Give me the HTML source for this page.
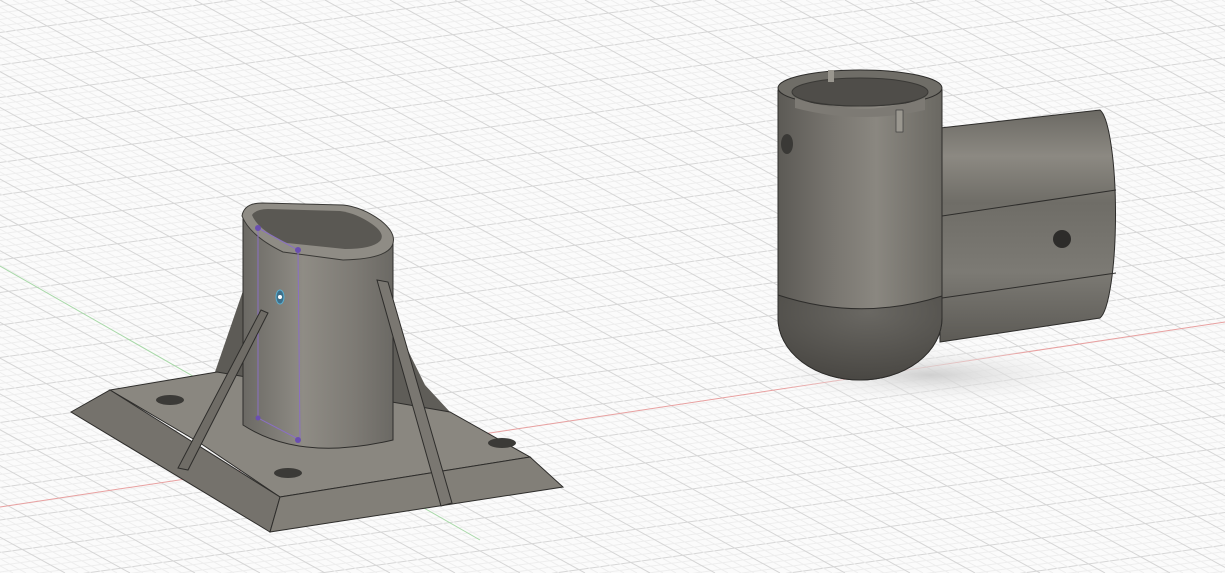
<!DOCTYPE html>
<html><head><meta charset="utf-8"><style>
html,body{margin:0;padding:0;background:#fbfbfb;overflow:hidden;width:1225px;height:573px}
svg{display:block}
</style></head><body>
<svg id="s" width="1225" height="573" viewBox="0 0 1225 573" xmlns="http://www.w3.org/2000/svg">
<defs>
<linearGradient id="vcyl" x1="0" x2="1" y1="0" y2="0">
<stop offset="0" stop-color="#5c5a55"/><stop offset="0.35" stop-color="#7a7771"/><stop offset="0.6" stop-color="#8a8780"/><stop offset="1" stop-color="#6a6862"/></linearGradient>
<linearGradient id="hcyl" x1="0" x2="0" y1="0" y2="1">
<stop offset="0" stop-color="#6b6963"/><stop offset="0.2" stop-color="#8c8982"/><stop offset="0.4" stop-color="#6f6d67"/><stop offset="0.7" stop-color="#7c7a74"/><stop offset="1" stop-color="#5c5a55"/></linearGradient>
<radialGradient id="sph" cx="0.55" cy="0.2" r="0.9">
<stop offset="0" stop-color="#6a6863"/><stop offset="1" stop-color="#45433f"/></radialGradient>
<linearGradient id="tower" x1="0" x2="1">
<stop offset="0" stop-color="#6b6964"/><stop offset="0.4" stop-color="#8f8c85"/><stop offset="0.75" stop-color="#7d7a74"/><stop offset="1" stop-color="#6b6964"/></linearGradient>
<radialGradient id="shadow" cx="0.5" cy="0.5" r="0.5">
<stop offset="0" stop-color="#cfcfcf"/><stop offset="1" stop-color="#f4f4f4" stop-opacity="0"/></radialGradient>
</defs>
<g id="grid" stroke-width="1"></g>
<line x1="0" y1="507" x2="1225" y2="322" stroke="#e8a0a0" stroke-width="1"/>
<line x1="0" y1="266" x2="480" y2="540" stroke="#a8d8a8" stroke-width="1"/>

<ellipse cx="930" cy="375" rx="170" ry="30" fill="url(#shadow)"/>
<path d="M940 128 L1100 110 A18 105 0 0 1 1100 318 L940 342 Z" fill="url(#hcyl)" stroke="#2e2d2b" stroke-width="1"/>
<path d="M942 216 L1116 190" stroke="#2e2d2b" fill="none"/>
<path d="M942 298 L1116 273" stroke="#2e2d2b" fill="none"/>
<ellipse cx="1062" cy="239" rx="9" ry="9" fill="#2d2c2a"/>
<path d="M778 90 L778 318 A82 62 0 0 0 942 318 L942 90 Z" fill="url(#vcyl)" stroke="#2e2d2b"/>
<path d="M778 295 Q860 322 942 296 L942 318 A82 62 0 0 1 778 318 Z" fill="url(#sph)" stroke="#2e2d2b"/>
<ellipse cx="860" cy="88" rx="82" ry="18" fill="#6f6d67" stroke="#2e2d2b"/>
<ellipse cx="860" cy="92" rx="68" ry="14" fill="#4f4d49" stroke="#3a3936"/>
<path d="M795 98 Q860 120 925 98 L925 110 Q860 125 795 108Z" fill="#7d7a74"/>
<rect x="828" y="70" width="6" height="12" fill="#9a978f"/>
<rect x="896" y="110" width="7" height="22" fill="#9a978f" stroke="#333" stroke-width=".6"/>
<ellipse cx="787" cy="144" rx="6" ry="10" fill="#3a3936"/>

<polygon points="215,372 245,285 250,425" fill="#5d5b56"/>
<polygon points="393,320 425,385 450,412 393,425" fill="#5f5d58"/>
<polygon points="110,390 217,372 450,412 530,457 280,497 200,443" fill="#8a8780" stroke="#2e2d2b"/>
<polygon points="71,412 110,390 280,497 270,532" fill="#75726c" stroke="#2e2d2b"/>
<polygon points="280,497 530,457 563,487 270,532" fill="#827f78" stroke="#2e2d2b"/>
<ellipse cx="170" cy="400" rx="14" ry="5" fill="#3b3a37"/>
<ellipse cx="288" cy="473" rx="14" ry="5" fill="#3b3a37"/>
<ellipse cx="502" cy="443" rx="14" ry="5" fill="#3b3a37"/>
<path d="M243 218 L243 425 Q300 462 393 440 L393 243 Z" fill="url(#tower)" stroke="#2e2d2b"/>
<path d="M242 216 Q244 203 262 203 L343 205 Q362 207 380 220 Q398 234 392 246 Q385 259 343 260 L283 252 Q250 236 242 216Z" fill="#8f8c85" stroke="#3a3936"/>
<path d="M252 215 Q256 209 268 209 L340 211 Q356 213 372 224 Q386 234 380 241 Q372 249 345 249 L287 243 Q258 230 252 215Z" fill="#5a5853"/>
<path d="M258 228 L298 250 L300 440 L258 418Z" fill="none" stroke="#8a6fc4" stroke-width="1"/>
<circle cx="258" cy="228" r="3" fill="#6a4fb0"/><circle cx="298" cy="250" r="3" fill="#6a4fb0"/>
<circle cx="258" cy="418" r="2.5" fill="#6a4fb0"/><circle cx="298" cy="440" r="3" fill="#6a4fb0"/>
<ellipse cx="280" cy="297" rx="4" ry="7" fill="#3d6f8a" stroke="#5aaed0"/>
<circle cx="280" cy="297" r="2" fill="#fff"/>
<polygon points="261,310 268,313 188,470 178,468" fill="#6f6c66" stroke="#2e2d2b"/>
<polygon points="377,280 388,282 452,503 441,506" fill="#7a7771" stroke="#2e2d2b"/>
</svg>
<script>
var g=document.getElementById('grid'),ns='http://www.w3.org/2000/svg';
function L(x1,y1,x2,y2,c){var l=document.createElementNS(ns,'line');l.setAttribute('x1',x1);l.setAttribute('y1',y1);l.setAttribute('x2',x2);l.setAttribute('y2',y2);l.setAttribute('stroke',c);g.appendChild(l);}
for(var i=-60;i<200;i++){var y=i*6.5;L(0,y,1225,y-170,i%5==0?'#d6d6d6':'#eeeeee');}
for(var j=-120;j<120;j++){var x=j*13;L(x,0,x+1040,573,j%5==0?'#d6d6d6':'#eeeeee');}
</script>
</body></html>
